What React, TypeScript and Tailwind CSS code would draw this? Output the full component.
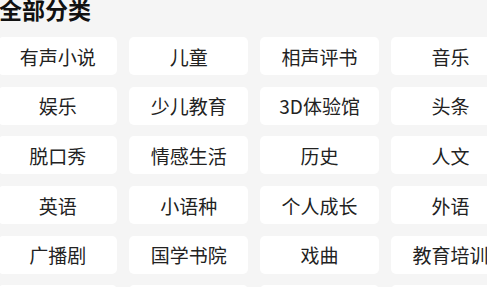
import React from 'react';

const categories = [
  '有声小说', '儿童', '相声评书', '音乐',
  '娱乐', '少儿教育', '3D体验馆', '头条',
  '脱口秀', '情感生活', '历史', '人文',
  '英语', '小语种', '个人成长', '外语',
  '广播剧', '国学书院', '戏曲', '教育培训',
  '', '', '', '',
];

export default function App() {
  return (
    <div
      className="w-[487px] h-[287px] overflow-hidden bg-[#f5f5f5]"
      style={{ fontFamily: '"Noto Sans CJK SC", "Noto Sans", sans-serif' }}
    >
      <div className="-ml-[2px] -mt-[2px]">
        {/* Header */}
        <h1 className="pl-[1px] text-[23px] leading-none font-bold text-[#111]">全部分类</h1>

        {/* Category grid */}
        <div className="mt-[16px] grid grid-cols-[repeat(4,119.3px)] auto-rows-[38px] gap-[11.7px]">
          {categories.map((c, i) => (
            <div
              key={i}
              className="flex items-center justify-center rounded-[5px] bg-white text-[19px] leading-none text-[#222] whitespace-nowrap"
            >
              {c}
            </div>
          ))}
        </div>
      </div>
    </div>
  );
}
